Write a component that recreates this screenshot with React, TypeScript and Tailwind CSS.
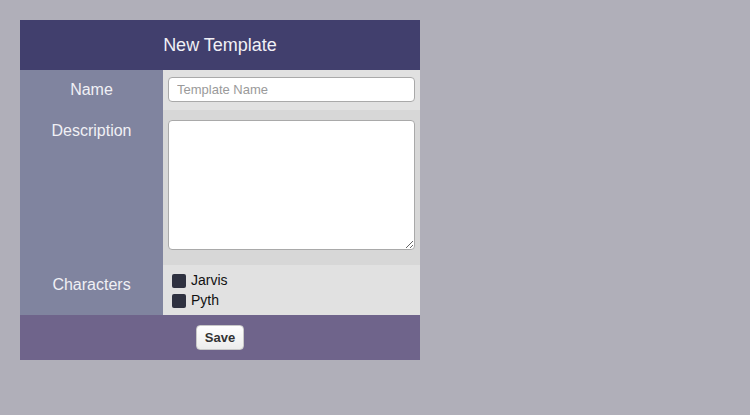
const App = () => {
  return (
    <div className="min-h-[415px] w-full bg-[#b0afb9] pt-5 pl-5 font-['Liberation_Sans',Arial,sans-serif]">
      <div className="w-[400px]">
        <div className="flex h-[50px] items-center justify-center bg-[#413f6d] text-[18px] text-[#f0f0f5]">
          New Template
        </div>

        <div className="flex h-[40px]">
          <div className="flex w-[143px] items-center justify-center bg-[#80849f] text-[16px] text-[#f0f0f5]">Name</div>
          <div className="flex-1 bg-[#e1e1e1] pl-[5px] pr-[5px] pt-[7px]">
            <input
              type="text"
              placeholder="Template Name"
              className="block h-[25px] w-full rounded-[4px] border border-[#a9a9a9] bg-white px-2 text-[13px] text-[#333] placeholder:text-[#9a9a9a] outline-none"
            />
          </div>
        </div>

        <div className="flex h-[155px]">
          <div className="w-[143px] bg-[#80849f] pt-[9px] text-center text-[16px] text-[#f0f0f5]">Description</div>
          <div className="flex-1 bg-[#d7d7d7] pl-[5px] pr-[5px] pt-[10px]">
            <textarea className="block h-[130px] w-full rounded-[4px] border border-[#a9a9a9] bg-white outline-none" />
          </div>
        </div>

        <div className="flex h-[50px]">
          <div className="flex w-[143px] items-center justify-center bg-[#80849f] pb-[10px] text-[16px] text-[#f0f0f5]">Characters</div>
          <div className="flex flex-1 flex-col justify-center gap-[4px] bg-[#e1e1e1] pl-[9px]">
            {["Jarvis", "Pyth"].map((name) => (
              <label key={name} className="flex h-[16px] items-center text-[14px] text-[#111]">
                <span className="mr-[5px] mt-[2px] block h-[14px] w-[14px] rounded-[2px] bg-[#2e3140]" />
                {name}
              </label>
            ))}
          </div>
        </div>

        <div className="flex h-[45px] items-center justify-center bg-[#6f648b]">
          <button className="h-[25px] rounded-[4px] border border-[#c8c8c8] bg-gradient-to-b from-white to-[#ececec] px-[8px] text-[13px] font-bold text-[#333]">
            Save
          </button>
        </div>
      </div>
    </div>
  );
};

export default App;
